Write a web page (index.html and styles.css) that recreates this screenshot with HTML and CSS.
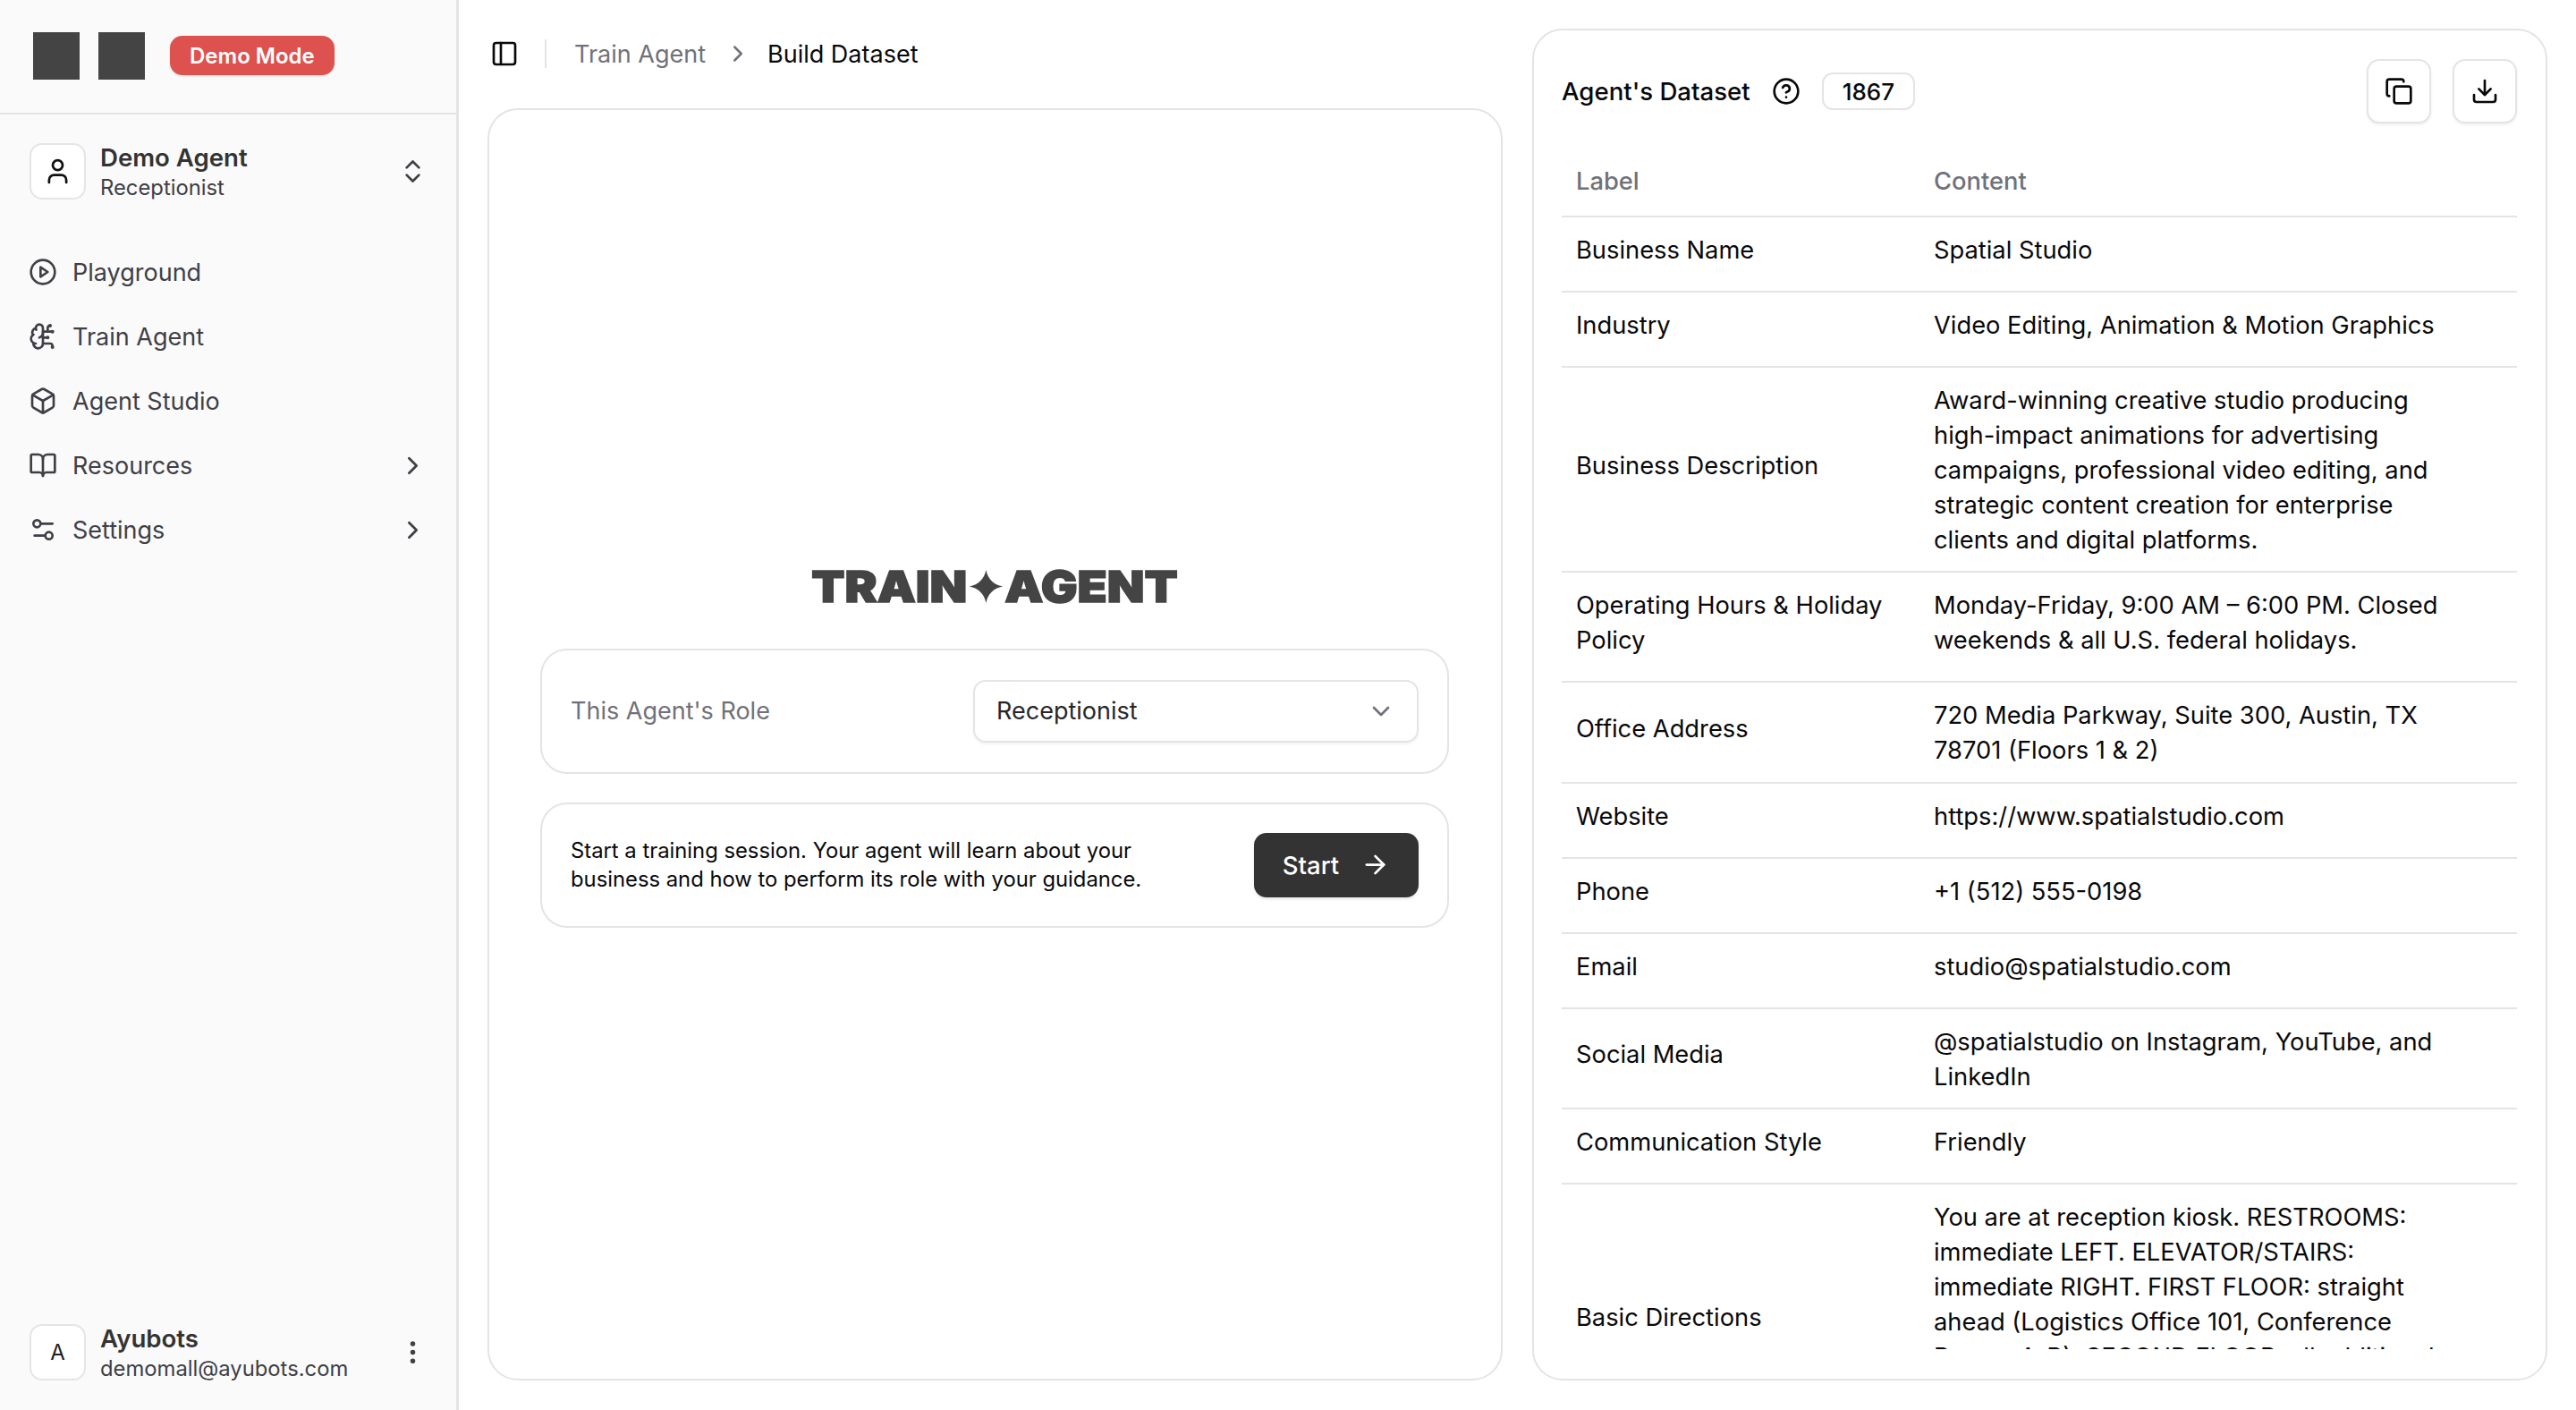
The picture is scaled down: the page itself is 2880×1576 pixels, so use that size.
FILE: index.html
```html
<!DOCTYPE html>
<html lang="en">
  <head>
    <meta charset="UTF-8" />
    <title>Build Dataset - Train Agent</title>
    <link rel="stylesheet" href="styles.css">
  </head>
  <body>
    <div class="app">
      <aside class="sidebar">
        <div class="brand">
          <span class="logo-box"></span>
          <span class="logo-box"></span>
          <span class="demo-badge">Demo Mode</span>
        </div>

        <div class="agent-row">
          <span class="avatar">
            <svg class="icon icon-avatar" viewBox="0 0 24 24"><path d="M19 21v-2a4 4 0 0 0-4-4H9a4 4 0 0 0-4 4v2"/><circle cx="12" cy="7" r="4"/></svg>
          </span>
          <div class="who">
            <div class="who-name">Demo Agent</div>
            <div class="who-sub">Receptionist</div>
          </div>
          <svg class="icon icon-side" viewBox="0 0 24 24"><path d="m7 15 5 5 5-5"/><path d="m7 9 5-5 5 5"/></svg>
        </div>

        <nav class="nav">
          <a class="nav-item">
            <svg class="icon" viewBox="0 0 24 24"><circle cx="12" cy="12" r="10"/><polygon points="10 8 16 12 10 16 10 8"/></svg>
            <span>Playground</span>
          </a>
          <a class="nav-item">
            <svg class="icon" viewBox="0 0 24 24"><path d="M12 5a3 3 0 1 0-5.997.125 4 4 0 0 0-2.526 5.77 4 4 0 0 0 .556 6.588A4 4 0 1 0 12 18Z"/><path d="M9 13a4.5 4.5 0 0 0 3-4"/><path d="M6.003 5.125A3 3 0 0 0 6.401 6.5"/><path d="M3.477 10.896a4 4 0 0 1 .585-.396"/><path d="M6 18a4 4 0 0 1-1.967-.516"/><path d="M12 13h4"/><path d="M12 18h6a2 2 0 0 1 2 2v1"/><path d="M12 8h8"/><path d="M16 8V5a2 2 0 0 1 2-2"/><circle cx="16" cy="13" r=".5"/><circle cx="18" cy="3" r=".5"/><circle cx="20" cy="21" r=".5"/><circle cx="20" cy="8" r=".5"/></svg>
            <span>Train Agent</span>
          </a>
          <a class="nav-item">
            <svg class="icon" viewBox="0 0 24 24"><path d="M21 8a2 2 0 0 0-1-1.73l-7-4a2 2 0 0 0-2 0l-7 4A2 2 0 0 0 3 8v8a2 2 0 0 0 1 1.73l7 4a2 2 0 0 0 2 0l7-4A2 2 0 0 0 21 16Z"/><path d="m3.3 7 8.7 5 8.7-5"/><path d="M12 22V12"/></svg>
            <span>Agent Studio</span>
          </a>
          <a class="nav-item">
            <svg class="icon" viewBox="0 0 24 24"><path d="M12 7v14"/><path d="M3 18a1 1 0 0 1-1-1V4a1 1 0 0 1 1-1h5a4 4 0 0 1 4 4 4 4 0 0 1 4-4h5a1 1 0 0 1 1 1v13a1 1 0 0 1-1 1h-6a3 3 0 0 0-3 3 3 3 0 0 0-3-3z"/></svg>
            <span>Resources</span>
            <svg class="icon icon-side" viewBox="0 0 24 24"><path d="m9 18 6-6-6-6"/></svg>
          </a>
          <a class="nav-item">
            <svg class="icon" viewBox="0 0 24 24"><path d="M20 7h-9"/><path d="M14 17H5"/><circle cx="17" cy="17" r="3"/><circle cx="7" cy="7" r="3"/></svg>
            <span>Settings</span>
            <svg class="icon icon-side" viewBox="0 0 24 24"><path d="m9 18 6-6-6-6"/></svg>
          </a>
        </nav>

        <div class="account">
          <span class="avatar avatar-letter">A</span>
          <div class="who">
            <div class="who-name who-name-bold">Ayubots</div>
            <div class="who-sub">demomall@ayubots.com</div>
          </div>
          <svg class="icon icon-side" viewBox="0 0 24 24"><circle cx="12" cy="12" r="1"/><circle cx="12" cy="5" r="1"/><circle cx="12" cy="19" r="1"/></svg>
        </div>
      </aside>

      <main class="main">
        <section class="left-col">
          <header class="topbar">
            <svg class="icon icon-dark" viewBox="0 0 24 24"><rect x="3" y="3" width="18" height="18" rx="2"/><path d="M9 3v18"/></svg>
            <span class="top-divider"></span>
            <span class="crumb-muted">Train Agent</span>
            <svg class="icon icon-crumb" viewBox="0 0 24 24"><path d="m9 18 6-6-6-6"/></svg>
            <span class="crumb-current">Build Dataset</span>
          </header>

          <div class="train-card">
            <h1 class="train-title">
              <span>TRAIN</span>
              <svg class="title-star" viewBox="0 0 36 36" preserveAspectRatio="none"><path d="M18 0C20 10 26 16 36 18C26 20 20 26 18 36C16 26 10 20 0 18C10 16 16 10 18 0Z"/></svg>
              <span>AGENT</span>
            </h1>

            <div class="inner-card">
              <span class="role-label">This Agent's Role</span>
              <div class="select">
                <span>Receptionist</span>
                <svg class="icon icon-select" viewBox="0 0 24 24"><path d="m6 9 6 6 6-6"/></svg>
              </div>
            </div>

            <div class="inner-card">
              <p class="start-text">Start a training session. Your agent will learn about your business and how to perform its role with your guidance.</p>
              <button class="start-btn">
                Start
                <svg class="icon icon-arrow" viewBox="0 0 24 24"><path d="M5 12h14"/><path d="m12 5 7 7-7 7"/></svg>
              </button>
            </div>
          </div>
        </section>

        <section class="dataset-card">
          <div class="dataset-head">
            <span class="dataset-title">Agent's Dataset</span>
            <svg class="icon icon-dark icon-help" viewBox="0 0 24 24"><circle cx="12" cy="12" r="10"/><path d="M9.09 9a3 3 0 0 1 5.83 1c0 2-3 3-3 3"/><path d="M12 17h.01"/></svg>
            <span class="count">1867</span>
            <span class="head-spacer"></span>
            <button class="icon-btn">
              <svg class="icon icon-dark" viewBox="0 0 24 24"><rect x="8" y="8" width="14" height="14" rx="2"/><path d="M4 16c-1.1 0-2-.9-2-2V4c0-1.1.9-2 2-2h10c1.1 0 2 .9 2 2"/></svg>
            </button>
            <button class="icon-btn">
              <svg class="icon icon-dark" viewBox="0 0 24 24"><path d="M12 15V3"/><path d="M21 15v4a2 2 0 0 1-2 2H5a2 2 0 0 1-2-2v-4"/><path d="m7 10 5 5 5-5"/></svg>
            </button>
          </div>

          <div class="table-wrap">
            <table>
              <thead>
                <tr><th>Label</th><th>Content</th></tr>
              </thead>
              <tbody>
                <tr><td>Business Name</td><td>Spatial Studio</td></tr>
                <tr><td>Industry</td><td>Video Editing, Animation &amp; Motion Graphics</td></tr>
                <tr><td>Business Description</td><td>Award-winning creative studio producing high-impact animations for advertising campaigns, professional video editing, and strategic content creation for enterprise clients and digital platforms.</td></tr>
                <tr><td>Operating Hours &amp; Holiday Policy</td><td>Monday-Friday, 9:00 AM – 6:00 PM. Closed weekends &amp; all U.S. federal holidays.</td></tr>
                <tr><td>Office Address</td><td>720 Media Parkway, Suite 300, Austin, TX 78701 (Floors 1 &amp; 2)</td></tr>
                <tr><td>Website</td><td>https://www.spatialstudio.com</td></tr>
                <tr><td>Phone</td><td>+1 (512) 555-0198</td></tr>
                <tr><td>Email</td><td>studio@spatialstudio.com</td></tr>
                <tr><td>Social Media</td><td>@spatialstudio on Instagram, YouTube, and LinkedIn</td></tr>
                <tr><td>Communication Style</td><td>Friendly</td></tr>
                <tr><td>Basic Directions</td><td>You are at reception kiosk. RESTROOMS: immediate LEFT. ELEVATOR/STAIRS: immediate RIGHT. FIRST FLOOR: straight ahead (Logistics Office 101, Conference Rooms A-B). SECOND FLOOR: all additional offices, studios and the edit suites, take the elevator up one level and turn right.</td></tr>
              </tbody>
            </table>
          </div>
        </section>
      </main>
    </div>
  </body>
</html>
```

FILE: styles.css
```css
* {
  box-sizing: border-box;
}
html,
body {
  height: 100%;
}
body {
  margin: 0;
  font-family: Inter, "Liberation Sans", sans-serif;
  font-size: 27px;
  color: #09090b;
  background: white;
  overflow: hidden;
}
.app {
  display: flex;
  height: 100%;
}
.icon {
  width: 32px;
  height: 32px;
  flex: none;
  fill: none;
  stroke: #3f3f46;
  stroke-width: 2;
  stroke-linecap: round;
  stroke-linejoin: round;
}
.icon-dark {
  stroke: #09090b;
}
.icon-side {
  margin-left: auto;
  width: 33px;
  height: 33px;
}

/* sidebar */
.sidebar {
  width: 513px;
  flex: none;
  display: flex;
  flex-direction: column;
  background: #fafafa;
  border-right: 3px solid #e4e4e7;
}
.brand {
  height: 128px;
  flex: none;
  display: flex;
  align-items: center;
  padding: 0 0 2px 37px;
  border-bottom: 2px solid #e4e4e7;
}
.logo-box {
  width: 52px;
  height: 53px;
  background: #444;
  margin-right: 21px;
}
.demo-badge {
  margin-left: 7px;
  height: 44px;
  padding: 0 22px;
  display: flex;
  align-items: center;
  font-size: 24px;
  font-weight: 600;
  color: white;
  background: #dd524f;
  border-radius: 14px;
  box-shadow: 0 1px 3px rgba(0, 0, 0, 0.12);
}
.agent-row,
.account {
  display: flex;
  align-items: center;
  padding: 0 32px 0 33px;
  height: 63px;
  flex: none;
}
.agent-row {
  margin-top: 32px;
}
.account {
  margin-top: auto;
  margin-bottom: 33px;
}
.avatar {
  width: 63px;
  height: 63px;
  flex: none;
  display: flex;
  align-items: center;
  justify-content: center;
  background: white;
  border: 2px solid #e5e5e5;
  border-radius: 14px;
}
.icon-avatar {
  stroke: #111;
  width: 33px;
  height: 33px;
}
.avatar-letter {
  font-size: 24px;
  color: #222;
}
.who {
  margin-left: 16px;
}
.who-name {
  font-size: 27.6px;
  line-height: 36px;
  font-weight: 600;
  color: #333;
}
.who-sub {
  font-size: 23.8px;
  line-height: 32px;
  color: #3f3f46;
}
.nav {
  display: flex;
  flex-direction: column;
  margin-top: 45px;
}
.nav-item {
  height: 72px;
  display: flex;
  align-items: center;
  padding: 0 32px;
  gap: 17px;
  color: #3f3f46;
}

/* main area */
.main {
  flex: 1;
  display: flex;
  gap: 33px;
  padding: 32px 32px 33px;
  min-width: 0;
}
.left-col {
  width: 1135px;
  flex: none;
  display: flex;
  flex-direction: column;
}
.topbar {
  height: 89px;
  flex: none;
  display: flex;
  align-items: center;
  padding: 0 0 33px 3px;
}
.top-divider {
  width: 2px;
  height: 32px;
  margin: 0 31px 0 29px;
  background: #e4e4e7;
}
.crumb-muted {
  color: #71717a;
}
.icon-crumb {
  stroke: #71717a;
  width: 30px;
  height: 30px;
  margin: 0 18px 0 21px;
}
.train-card {
  flex: 1;
  display: flex;
  flex-direction: column;
  justify-content: center;
  gap: 32px;
  padding: 10px 58px 0 57px;
  border: 2px solid #e4e4e7;
  border-radius: 34px;
}
.train-title {
  margin: 0 0 19px;
  display: flex;
  justify-content: center;
  align-items: center;
  gap: 2px;
  height: 36px;
  font-size: 48px;
  font-weight: 900;
  line-height: 36px;
  color: #444;
  -webkit-text-stroke: 1.5px #444;
  transform: scaleX(1.13);
}
.title-star {
  width: 33px;
  height: 37px;
  fill: #444;
}
.inner-card {
  display: flex;
  align-items: center;
  justify-content: space-between;
  height: 140px;
  padding: 0 32px;
  border: 2px solid #e4e4e7;
  border-radius: 30px;
}
.role-label {
  color: #71717a;
}
.select {
  width: 498px;
  height: 70px;
  display: flex;
  align-items: center;
  justify-content: space-between;
  padding: 0 24px;
  color: #27272a;
  border: 2px solid #e4e4e7;
  border-radius: 14px;
  box-shadow: 0 2px 3px rgba(0, 0, 0, 0.05);
}
.icon-select {
  stroke: #71717a;
  width: 32px;
  height: 32px;
}
.start-text {
  margin: 0;
  width: 660px;
  font-size: 23.8px;
  line-height: 32px;
}
.start-btn {
  width: 184px;
  height: 72px;
  display: flex;
  align-items: center;
  justify-content: center;
  gap: 24px;
  font: 500 27.5px Inter, sans-serif;
  color: white;
  background: #333;
  border: none;
  border-radius: 14px;
  box-shadow: 0 2px 3px rgba(0, 0, 0, 0.1);
}
.icon-arrow {
  stroke: white;
  width: 33px;
  height: 33px;
}

/* dataset panel */
.dataset-card {
  flex: 1;
  min-width: 0;
  display: flex;
  flex-direction: column;
  padding: 33px 32px 33px 31px;
  border: 2px solid #e4e4e7;
  border-radius: 34px;
}
.dataset-head {
  display: flex;
  align-items: center;
  height: 70px;
  flex: none;
  margin-bottom: 25px;
}
.dataset-title {
  font-size: 27.6px;
  font-weight: 500;
}
.icon-help {
  margin-left: 24px;
}
.count {
  margin-left: 24px;
  height: 42px;
  padding: 0 21px;
  display: flex;
  align-items: center;
  font-size: 26px;
  font-weight: 500;
  border: 2px solid #e4e4e7;
  border-radius: 12px;
}
.head-spacer {
  flex: 1;
}
.icon-btn {
  width: 72px;
  height: 72px;
  margin-left: 24px;
  display: flex;
  align-items: center;
  justify-content: center;
  background: white;
  border: 2px solid #e4e4e7;
  border-radius: 14px;
  box-shadow: 0 2px 3px rgba(0, 0, 0, 0.06);
}
.table-wrap {
  flex: 1;
  min-height: 0;
  overflow: hidden;
}
table {
  width: 100%;
  table-layout: fixed;
  border-collapse: separate;
  border-spacing: 0;
  font-size: 27.3px;
}
th,
td {
  text-align: left;
  line-height: 39px;
  border-bottom: 2px solid #e4e4e7;
}
th {
  padding: 21px 16px 19px;
  color: #71717a;
  font-weight: 500;
}
td {
  padding: 17px 80px 15.6px 16px;
  font-weight: 400;
  vertical-align: top;
}
th:first-child {
  width: 400px;
}
td:first-child {
  padding: 17px 16px 25.9px;
  vertical-align: middle;
}
```
